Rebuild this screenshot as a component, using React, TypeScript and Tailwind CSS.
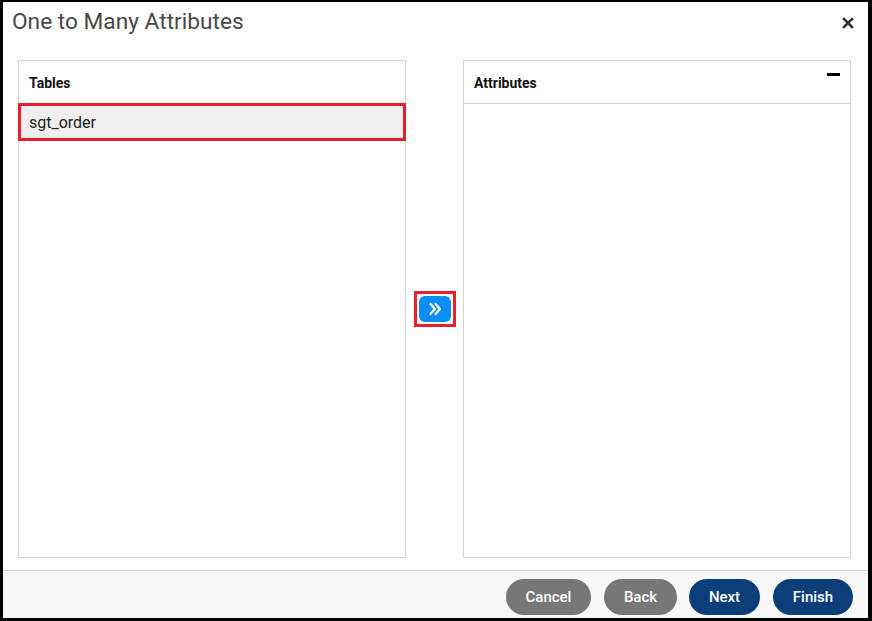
export default function App() {
  return (
    <div className="w-[872px] h-[621px] bg-white" style={{ fontFamily: "Roboto, 'Liberation Sans', sans-serif" }}>
      <div className="w-full h-full flex flex-col border-black border-l-[3px] border-t-[2px] border-r-[4px] border-b-[3px]">
        {/* Title */}
        <div className="h-[58px] flex items-start justify-between pl-[9px] pr-[14px] pt-[6px]">
          <h1 className="text-[22.7px] leading-[28px] text-[#484848]">One to Many Attributes</h1>
          <svg className="w-[12px] h-[12px] mt-[9px]" viewBox="0 0 12 12" fill="none" stroke="#333" strokeWidth="2.6" strokeLinecap="square">
            <path d="M2 2 L10 10 M10 2 L2 10" />
          </svg>
        </div>

        {/* Panels */}
        <div className="h-[498px] flex pl-[15px] pr-[17px]">
          <div className="w-[388px] h-full border border-[#d4d4d4] flex flex-col">
            <div className="h-[42px] flex items-center px-[10px] pt-[2px] text-[14px] font-bold text-[#111]">Tables</div>
            <div className="-mx-px h-[38px] border-[3px] border-[#e8202a] bg-[#efefef] flex items-center pl-[8px] pt-px text-[16px] text-[#222]">
              sgt_order
            </div>
          </div>

          <div className="flex-1 flex items-center justify-center">
            <div className="border-[3px] border-[#e8202a] p-[2px]">
              <button className="w-[32px] h-[26px] rounded-[6px] bg-[#0b8ef7] flex items-center justify-center">
                <svg className="w-[16px] h-[16px]" viewBox="0 0 16 16" fill="none" stroke="white" strokeWidth="2.2" strokeLinecap="round" strokeLinejoin="round">
                  <path d="M3.5 3 L8 8 L3.5 13 M8.5 3 L13 8 L8.5 13" />
                </svg>
              </button>
            </div>
          </div>

          <div className="w-[388px] h-full border border-[#d4d4d4] flex flex-col">
            <div className="h-[43px] flex items-center justify-between px-[10px] pt-[2px] border-b border-[#d4d4d4] relative">
              <span className="text-[14px] font-bold text-[#111]">Attributes</span>
              <span className="absolute right-[10px] top-[12px] w-[13px] h-[3px] bg-black" />
            </div>
          </div>
        </div>

        {/* Footer */}
        <div className="mt-[12px] flex-1 bg-[#f7f7f7] border-t border-[#cfcfcf] flex items-start justify-end pt-[8px] pr-[15px]">
          <button className="w-[85px] h-[36px] rounded-full bg-[#777] text-white text-[15px] font-medium">Cancel</button>
          <button className="ml-[13px] w-[73px] h-[36px] rounded-full bg-[#777] text-white text-[15px] font-medium">Back</button>
          <button className="ml-[12px] w-[71px] h-[36px] rounded-full bg-[#0c3f7a] text-white text-[15px] font-medium">Next</button>
          <button className="ml-[13px] w-[80px] h-[36px] rounded-full bg-[#0c3f7a] text-white text-[15px] font-medium">Finish</button>
        </div>
      </div>
    </div>
  );
}
